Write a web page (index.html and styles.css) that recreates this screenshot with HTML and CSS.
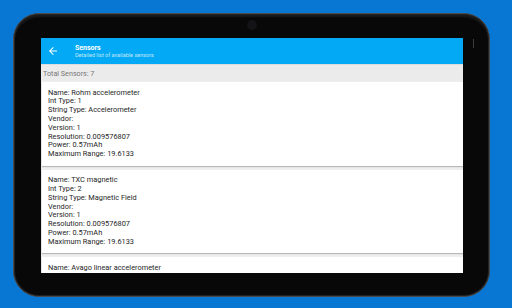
FILE: index.html
```html
<!DOCTYPE html>
<html>
<head>
<meta charset="utf-8">
<link rel="stylesheet" href="styles.css">
</head>
<body>
<div class="stage">
  <div class="tablet">
    <div class="camera"></div>
    <div class="slit"></div>
    <div class="screen">
      <div class="toolbar">
        <svg class="back" width="12" height="12" viewBox="0 0 24 24"><path fill="#fff" d="M20 11H7.83l5.59-5.59L12 4l-8 8 8 8 1.41-1.41L7.83 13H20v-2z"/></svg>
        <div class="titles">
          <div class="title">Sensors</div>
          <div class="subtitle">Detailed list of available sensors</div>
        </div>
      </div>
      <div class="total">Total Sensors: 7</div>
      <div class="list">
        <div class="card">
          <div>Name: Rohm accelerometer</div>
          <div>Int Type: 1</div>
          <div>String Type: Accelerometer</div>
          <div>Vendor:</div>
          <div>Version: 1</div>
          <div>Resolution: 0.009576807</div>
          <div>Power: 0.57mAh</div>
          <div>Maximum Range: 19.6133</div>
        </div>
        <div class="card">
          <div>Name: TXC magnetic</div>
          <div>Int Type: 2</div>
          <div>String Type: Magnetic Field</div>
          <div>Vendor:</div>
          <div>Version: 1</div>
          <div>Resolution: 0.009576807</div>
          <div>Power: 0.57mAh</div>
          <div>Maximum Range: 19.6133</div>
        </div>
        <div class="card card-last">
          <div>Name: Avago linear accelerometer</div>
        </div>
      </div>
    </div>
  </div>
</div>
</body>
</html>
```

FILE: styles.css
```css
html, body {
  margin: 0;
  padding: 0;
}
body {
  width: 512px;
  height: 308px;
  overflow: hidden;
  background: #0877d4;
  font-family: Roboto, "Liberation Sans", sans-serif;
}
.stage {
  padding: 13px 0 0 13px;
}
.tablet {
  position: relative;
  box-sizing: border-box;
  width: 477px;
  height: 284px;
  border-radius: 26px;
  background: #080808;
  border: 1px solid #4a4a4a;
  box-shadow: inset 0 0 0 1px #222, inset 0 3px 2px #1c1c1c;
  padding: 24px 26px 23px 27px;
}
.camera {
  position: absolute;
  left: 233px;
  top: 6px;
  width: 10px;
  height: 10px;
  border-radius: 50%;
  background: #141416;
}
.slit {
  position: absolute;
  left: 459px;
  top: 25px;
  width: 1px;
  height: 9px;
  background: #3c3c3c;
}
.screen {
  width: 100%;
  height: 100%;
  background: #eeeeee;
  display: flex;
  flex-direction: column;
  overflow: hidden;
}
.toolbar {
  flex: 0 0 26px;
  background: #03a9f4;
  display: flex;
  align-items: center;
}
.back {
  margin-left: 6px;
  flex: none;
}
.titles {
  margin-left: 16px;
  color: #fff;
  padding-top: 1px;
}
.title {
  font-size: 7px;
  font-weight: 700;
  line-height: 8px;
}
.subtitle {
  font-size: 5.5px;
  line-height: 7px;
  color: rgba(255, 255, 255, 0.75);
}
.total {
  flex: 0 0 17px;
  background: #ebebeb;
  color: #777;
  font-size: 7.2px;
  display: flex;
  align-items: center;
  padding-left: 2px;
  box-sizing: border-box;
  border-top: 1px solid #dcdcdc;
}
.list {
  padding: 1px 0 0 1px;
  display: flex;
  flex-direction: column;
  gap: 4px;
  background: #eeeeee;
}
.card {
  background: #fff;
  padding: 6.6px 6px;
  font-size: 7.4px;
  line-height: 8.8px;
  color: #262626;
  box-shadow: 0 1px 1px rgba(0, 0, 0, 0.22);
}
.card-last {
  padding-bottom: 20px;
}
```
